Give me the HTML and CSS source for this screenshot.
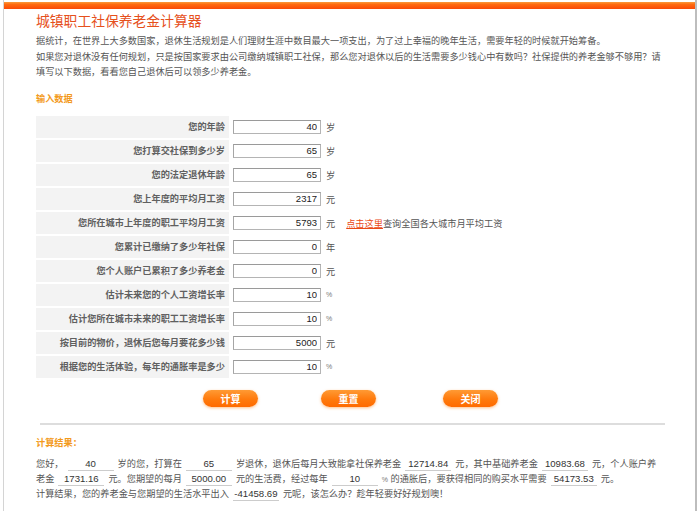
FILE: index.html
```html
<!DOCTYPE html>
<html lang="zh-CN">
<head>
<meta charset="utf-8">
<title>城镇职工社保养老金计算器</title>
<link rel="stylesheet" href="styles.css">
</head>
<body>
<div class="page">
  <div class="topbar"></div>
  <div class="content">
    <h1 class="title">城镇职工社保养老金计算器</h1>
    <div class="intro">
      <p>据统计，在世界上大多数国家，退休生活规划是人们理财生涯中数目最大一项支出，为了过上幸福的晚年生活，需要年轻的时候就开始筹备。</p>
      <p>如果您对退休没有任何规划，只是按国家要求由公司缴纳城镇职工社保，那么您对退休以后的生活需要多少钱心中有数吗？社保提供的养老金够不够用？请填写以下数据，看看您自己退休后可以领多少养老金。</p>
    </div>
    <h2 class="section">输入数据</h2>
    <div class="form">
      <div class="row"><label class="lbl">您的年龄</label><input class="num" type="text" value="40"><span class="unit">岁</span></div>
      <div class="row"><label class="lbl">您打算交社保到多少岁</label><input class="num" type="text" value="65"><span class="unit">岁</span></div>
      <div class="row"><label class="lbl">您的法定退休年龄</label><input class="num" type="text" value="65"><span class="unit">岁</span></div>
      <div class="row"><label class="lbl">您上年度的平均月工资</label><input class="num" type="text" value="2317"><span class="unit">元</span></div>
      <div class="row"><label class="lbl">您所在城市上年度的职工平均月工资</label><input class="num" type="text" value="5793"><span class="unit">元</span><span class="hint"><a class="link" href="#">点击这里</a>查询全国各大城市月平均工资</span></div>
      <div class="row"><label class="lbl">您累计已缴纳了多少年社保</label><input class="num" type="text" value="0"><span class="unit">年</span></div>
      <div class="row"><label class="lbl">您个人账户已累积了多少养老金</label><input class="num" type="text" value="0"><span class="unit">元</span></div>
      <div class="row"><label class="lbl">估计未来您的个人工资增长率</label><input class="num" type="text" value="10"><span class="unit pct">%</span></div>
      <div class="row"><label class="lbl">估计您所在城市未来的职工工资增长率</label><input class="num" type="text" value="10"><span class="unit pct">%</span></div>
      <div class="row"><label class="lbl">按目前的物价，退休后您每月要花多少钱</label><input class="num" type="text" value="5000"><span class="unit">元</span></div>
      <div class="row"><label class="lbl">根据您的生活体验，每年的通胀率是多少</label><input class="num" type="text" value="10"><span class="unit pct">%</span></div>
    </div>
    <div class="buttons">
      <button class="btn" type="button">计算</button>
      <button class="btn" type="button">重置</button>
      <button class="btn btn-close" type="button">关闭</button>
    </div>
    <div class="sep"></div>
    <h2 class="section result-head">计算结果：</h2>
    <div class="result">
      您好，<span class="val">40</span>岁的您，打算在<span class="val">65</span>岁退休，退休后每月大致能拿社保养老金<span class="val">12714.84</span>元，其中基础养老金<span class="val">10983.68</span>元，个人账户养<br>老金<span class="val">1731.16</span>元。您期望的每月<span class="val">5000.00</span>元的生活费，经过每年<span class="val">10</span><span class="pct">%</span> 的通胀后，要获得相同的购买水平需要<span class="val">54173.53</span>元。<br>计算结果，您的养老金与您期望的生活水平出入<span class="val">-41458.69</span>元呢，该怎么办？趁年轻要好好规划噢！
    </div>
  </div>
</div>
</body>
</html>
```

FILE: styles.css
```css
html, body {
  margin: 0;
  padding: 0;
  background: #ffffff;
}

body {
  font-family: "Liberation Sans", "Noto Sans CJK SC", sans-serif;
  color: #555555;
  font-size: 9.2px;
}

.page {
  margin-left: 3px;
  width: 691px;
  height: 511px;
  border-left: 1px solid #d4d4d4;
  border-right: 2px solid #bdbdbd;
  overflow: hidden;
}

.topbar {
  margin-top: 2px;
  height: 7px;
  background: linear-gradient(#f99a3c 0%, #ff6a10 35%, #fa4a06 100%);
}

.content {
  padding-left: 32px;
}

.title {
  margin: 4px 0 0 0;
  font-size: 13.8px;
  line-height: 18px;
  font-weight: normal;
  color: #e6501c;
}

.intro {
  margin-top: 3px;
  width: 630px;
}

.intro p {
  margin: 0;
  line-height: 15.5px;
}

.section {
  margin: 10px 0 0 0;
  font-size: 9.2px;
  line-height: 16px;
  font-weight: bold;
  color: #f39a1c;
}

.form {
  margin-top: 9px;
  display: flex;
  flex-direction: column;
  gap: 2px;
}

.row {
  display: flex;
  align-items: center;
  height: 22px;
}

.lbl {
  width: 189px;
  height: 22px;
  padding-right: 4px;
  background: #f3f3f3;
  text-align: right;
  line-height: 22px;
  font-weight: bold;
  color: #606060;
}

.num {
  box-sizing: border-box;
  margin: 0 0 0 4px;
  width: 88px;
  height: 14px;
  padding: 0 3px 0 0;
  border: 1px solid #b4b4b4;
  border-top-color: #9a9a9a;
  border-left-color: #a6a6a6;
  font-family: "Liberation Sans", sans-serif;
  font-size: 9.5px;
  color: #222222;
  text-align: right;
  background: #ffffff;
  outline: none;
}

.unit {
  margin-left: 5px;
  color: #555555;
}

.pct {
  font-size: 7px;
  color: #777777;
}

.hint {
  margin-left: 11px;
  color: #555555;
}

.link {
  color: #ea4a16;
  text-decoration: underline;
}

.buttons {
  margin-top: 12px;
  padding-left: 167px;
  display: flex;
  gap: 63px;
}

.btn {
  width: 55px;
  height: 17px;
  padding: 0;
  border: none;
  border-radius: 9px;
  background: linear-gradient(#ff9a34 0%, #ff7a0c 55%, #ff6a00 100%);
  box-shadow: 0 1px 3px rgba(255, 140, 40, 0.55);
  color: #ffffff;
  font-family: "Noto Sans CJK SC", sans-serif;
  font-size: 10px;
  font-weight: bold;
  line-height: 17px;
}

.btn-close {
  margin-left: 4px;
}

.sep {
  margin: 16px 0 0 4px;
  width: 625px;
  height: 2px;
  background: #dddddd;
}

.result-head {
  margin-top: 11px;
  line-height: 15px;
}

.result {
  margin-top: 6px;
  line-height: 15px;
  white-space: nowrap;
}

.val {
  display: inline-block;
  box-sizing: border-box;
  width: 46px;
  height: 13px;
  margin: 0 4px;
  border-bottom: 1px solid #cccccc;
  font-family: "Liberation Sans", sans-serif;
  font-size: 9.6px;
  line-height: 12px;
  color: #333333;
  text-align: center;
  vertical-align: middle;
}
```
